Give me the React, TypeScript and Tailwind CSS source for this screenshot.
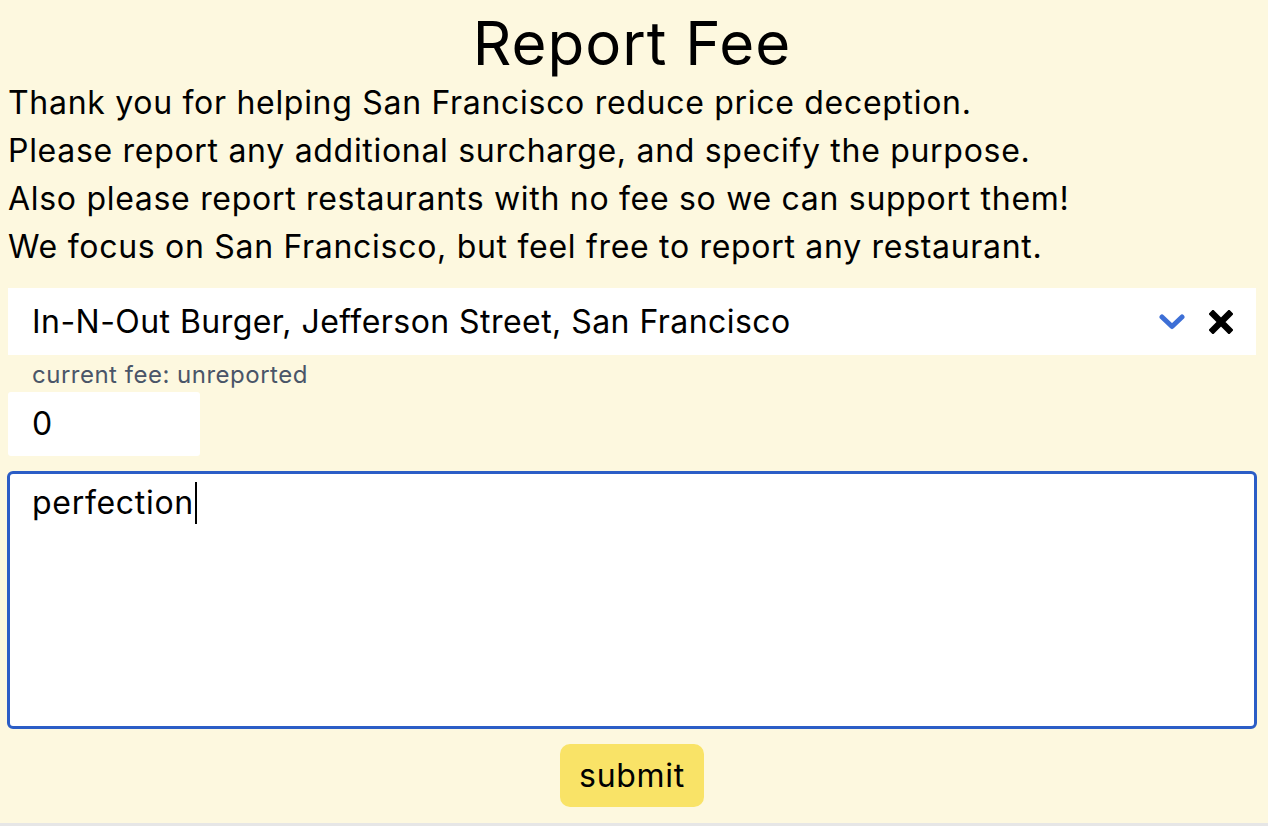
function ChevronDown() {
  return (
    <svg width="26" height="16" viewBox="0 0 26 16" fill="none">
      <path d="M3 3l10 9.5L23 3" stroke="#3d6fd6" strokeWidth="5" strokeLinecap="round" strokeLinejoin="round" />
    </svg>
  );
}

function ClearIcon() {
  return (
    <svg width="24" height="24" viewBox="0 0 24 24">
      <path d="M4 4l16 16M20 4L4 20" stroke="#000" strokeWidth="6.5" strokeLinecap="square" />
    </svg>
  );
}

export default function App() {
  const lines = [
    'Thank you for helping San Francisco reduce price deception.',
    'Please report any additional surcharge, and specify the purpose.',
    'Also please report restaurants with no fee so we can support them!',
    'We focus on San Francisco, but feel free to report any restaurant.',
  ];

  return (
    <div className="h-[826px] flex flex-col font-['Inter',sans-serif] text-black">
      <div className="flex-1 bg-[#fdf8df] pl-2 pr-3">
        {/* Header */}
        <h1 className="pt-[13px] pb-[6px] text-center text-[60px] leading-[60px] tracking-[1px]">Report Fee</h1>
        <div className="text-[32px] leading-[48px] tracking-[0.7px]">
          {lines.map((line) => (
            <p key={line} className="whitespace-nowrap">{line}</p>
          ))}
        </div>

        {/* Restaurant select */}
        <div className="mt-[17px] h-[67px] bg-white flex items-center pl-6 pr-[23px]">
          <span className="flex-1 text-[32px] tracking-[0.45px]">In-N-Out Burger, Jefferson Street, San Francisco</span>
          <div className="flex items-center gap-6">
            <ChevronDown />
            <ClearIcon />
          </div>
        </div>
        <div className="h-[37px] pt-[4px] pl-6 text-[24px] leading-[32px] tracking-[0.5px] text-[#4a5568]">
          current fee: unreported
        </div>

        {/* Fee amount */}
        <div className="w-[192px] h-[64px] bg-white rounded-[3px] flex items-center pl-6 text-[32px]">0</div>

        {/* Purpose */}
        <div className="mt-[15px] -mx-px h-[258px] border-[3px] border-[#2b5dc6] rounded-[6px] bg-white pt-[5px] pl-[22px]">
          <div className="flex items-center text-[32px] leading-[48px] tracking-[0.7px]">
            perfection
            <span className="ml-px w-[2px] h-[42px] bg-black" />
          </div>
        </div>

        <div className="mt-[15px] flex justify-center">
          <button className="w-[144px] h-[63px] rounded-[10px] bg-[#f9e367] text-[32px] tracking-[0.7px] text-black">
            submit
          </button>
        </div>
      </div>
      <div className="h-[3px] bg-[#e6e6e6]" />
    </div>
  );
}
